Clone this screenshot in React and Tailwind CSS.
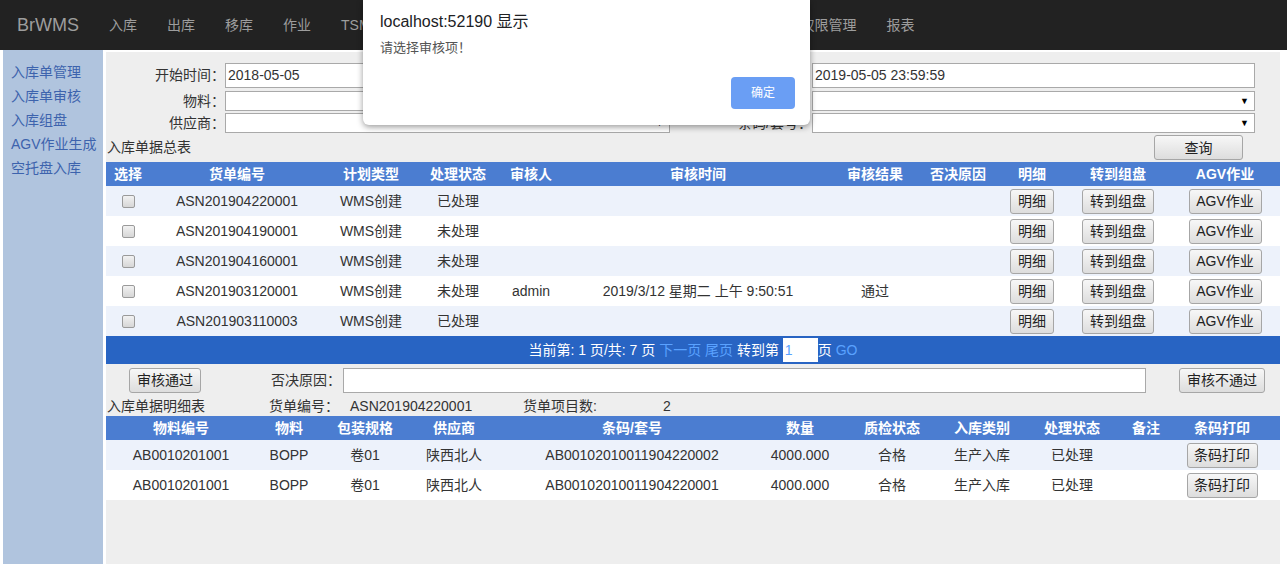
import React from 'react'

const NAV = ['入库', '出库', '移库', '作业', 'TSM接口', '基础数据', '库存管理', '盘点管理', '系统参数设置', '权限管理', '报表']
const SIDE = ['入库单管理', '入库单审核', '入库组盘', 'AGV作业生成', '空托盘入库']

const ORDERS = [
  { no: 'ASN201904220001', state: '已处理', who: '', time: '', result: '' },
  { no: 'ASN201904190001', state: '未处理', who: '', time: '', result: '' },
  { no: 'ASN201904160001', state: '未处理', who: '', time: '', result: '' },
  { no: 'ASN201903120001', state: '未处理', who: 'admin', time: '2019/3/12 星期二 上午 9:50:51', result: '通过' },
  { no: 'ASN201903110003', state: '已处理', who: '', time: '', result: '' },
]

const DETAILS = [
  { code: 'AB0010201001', bar: 'AB00102010011904220002' },
  { code: 'AB0010201001', bar: 'AB00102010011904220001' },
]

const btn =
  'h-[25px] border border-[#a6a6a6] rounded-[3px] bg-gradient-to-b from-[#f7f7f7] to-[#dddddd] text-[14px] text-[#222] leading-none'

function Btn({ w, children }) {
  return <button className={`${btn} ${w}`}>{children}</button>
}

function Select({ w }) {
  return (
    <div className={`${w} h-full bg-white border border-[#a9a9a9] flex items-center justify-end pr-[5px]`}>
      <span className="text-[9px] text-black leading-none">▼</span>
    </div>
  )
}

export default function App() {
  return (
    <div
      className="relative w-[1287px] h-[564px] overflow-hidden bg-white text-[14px] text-[#333]"
      style={{ fontFamily: '"Liberation Sans", "Noto Sans CJK SC", sans-serif' }}
    >
      <nav className="h-[50px] bg-[#222] flex items-center pl-[2px] text-[#9d9d9d] whitespace-nowrap">
        <span className="px-[15px] text-[18px]">BrWMS</span>
        {NAV.map((n) => (
          <span key={n} className="px-[15px] text-[14px]">
            {n}
          </span>
        ))}
      </nav>

      <div className="flex">
        <aside className="ml-[3px] w-[100px] h-[514px] bg-[#b0c4de] pt-[10px] pl-[8px]">
          {SIDE.map((s) => (
            <div key={s} className="leading-[24px] text-[#3d63ad] whitespace-nowrap">
              {s}
            </div>
          ))}
        </aside>

        <main className="ml-[3px] mt-[2px] w-[1174px] h-[512px] bg-[#eeeeee]">
          {/* filter form */}
          <div className="pt-[11px]">
            <div className="flex h-[25px] items-center">
              <label className="w-[119px] text-right">开始时间：</label>
              <div className="w-[445px] h-full bg-white border border-[#a9a9a9] pl-[2px] flex items-center">2018-05-05</div>
              <label className="w-[142px] text-right">结束时间：</label>
              <div className="w-[443px] h-full bg-white border border-[#a9a9a9] pl-[2px] flex items-center">2019-05-05 23:59:59</div>
            </div>
            <div className="flex h-[20px] items-center mt-[3px]">
              <label className="w-[119px] text-right">物料：</label>
              <Select w="w-[445px]" />
              <label className="w-[142px]"></label>
              <Select w="w-[443px]" />
            </div>
            <div className="flex h-[20px] items-center mt-[2px]">
              <label className="w-[119px] text-right">供应商：</label>
              <Select w="w-[445px]" />
              <label className="w-[142px] text-right">条码/套号：</label>
              <Select w="w-[443px]" />
            </div>
            <div className="flex h-[29px] items-center justify-between pl-[1px] pr-[37px]">
              <span>入库单据总表</span>
              <Btn w="w-[89px]">查询</Btn>
            </div>
          </div>

          {/* order table */}
          <div className="grid grid-cols-[44px_174px_94px_80px_66px_268px_86px_80px_68px_104px_110px] text-center">
            {['选择', '货单编号', '计划类型', '处理状态', '审核人', '审核时间', '审核结果', '否决原因', '明细', '转到组盘', 'AGV作业'].map((h) => (
              <div key={h} className="h-[24px] bg-[#4b7dd1] text-white font-bold flex items-center justify-center whitespace-nowrap">
                {h}
              </div>
            ))}
            {ORDERS.map((o, i) => {
              const bg = i % 2 === 0 ? 'bg-[#edf2fb]' : 'bg-white'
              const cell = `h-[30px] ${bg} flex items-center justify-center whitespace-nowrap`
              return (
                <React.Fragment key={o.no}>
                  <div className={cell}>
                    <input
                      type="checkbox"
                      readOnly
                      className="appearance-none w-[13px] h-[13px] rounded-[2px] border border-[#9a9a9a] bg-gradient-to-b from-[#f2f2f2] to-[#d6d6d6]"
                    />
                  </div>
                  <div className={cell}>{o.no}</div>
                  <div className={cell}>WMS创建</div>
                  <div className={cell}>{o.state}</div>
                  <div className={cell}>{o.who}</div>
                  <div className={cell}>{o.time}</div>
                  <div className={cell}>{o.result}</div>
                  <div className={cell}></div>
                  <div className={cell}>
                    <Btn w="w-[44px]">明细</Btn>
                  </div>
                  <div className={cell}>
                    <Btn w="w-[72px]">转到组盘</Btn>
                  </div>
                  <div className={cell}>
                    <Btn w="w-[73px]">AGV作业</Btn>
                  </div>
                </React.Fragment>
              )
            })}
          </div>

          {/* pager */}
          <div className="h-[28px] bg-[#2864c3] flex items-center justify-center text-white whitespace-pre">
            <span>当前第: 1 页/共: 7 页 </span>
            <span className="text-[#5aa2ff]">下一页 尾页 </span>
            <span>转到第 </span>
            <span className="w-[35px] h-[24px] bg-white text-[#5aa2ff] pl-[2px] flex items-center">1</span>
            <span>页 </span>
            <span className="text-[#5aa2ff]">GO</span>
          </div>

          {/* audit row */}
          <div className="h-[32px] flex items-center">
            <div className="ml-[23px]">
              <Btn w="w-[72px] h-[24px]">审核通过</Btn>
            </div>
            <label className="ml-[70px] w-[72px]">否决原因：</label>
            <div className="w-[803px] h-[25px] bg-white border border-[#a9a9a9]" />
            <div className="ml-[33px]">
              <Btn w="w-[86px] h-[24px]">审核不通过</Btn>
            </div>
          </div>

          {/* detail info */}
          <div className="h-[20px] flex items-center pl-[1px] whitespace-nowrap">
            <span className="w-[162px]">入库单据明细表</span>
            <span className="w-[81px]">货单编号：</span>
            <span className="w-[173px]">ASN201904220001</span>
            <span className="w-[140px]">货单项目数:</span>
            <span>2</span>
          </div>

          {/* detail table */}
          <div className="grid grid-cols-[150px_66px_86px_92px_264px_72px_112px_68px_112px_36px_116px] text-center">
            {['物料编号', '物料', '包装规格', '供应商', '条码/套号', '数量', '质检状态', '入库类别', '处理状态', '备注', '条码打印'].map((h) => (
              <div key={h} className="h-[24px] bg-[#4b7dd1] text-white font-bold flex items-center justify-center whitespace-nowrap">
                {h}
              </div>
            ))}
            {DETAILS.map((d, i) => {
              const bg = i % 2 === 0 ? 'bg-[#edf2fb]' : 'bg-white'
              const cell = `h-[30px] ${bg} flex items-center justify-center whitespace-nowrap`
              return (
                <React.Fragment key={d.bar}>
                  <div className={cell}>{d.code}</div>
                  <div className={cell}>BOPP</div>
                  <div className={cell}>卷01</div>
                  <div className={cell}>陕西北人</div>
                  <div className={cell}>{d.bar}</div>
                  <div className={cell}>4000.000</div>
                  <div className={cell}>合格</div>
                  <div className={cell}>生产入库</div>
                  <div className={cell}>已处理</div>
                  <div className={cell}></div>
                  <div className={cell}>
                    <Btn w="w-[71px]">条码打印</Btn>
                  </div>
                </React.Fragment>
              )
            })}
          </div>
        </main>
      </div>

      {/* alert dialog */}
      <div className="absolute left-[363px] top-0 w-[447px] h-[125px] bg-white rounded-b-[6px] shadow-[0_2px_6px_rgba(0,0,0,0.4)]">
        <div className="pl-[17px] pt-[12px] text-[16px] leading-[20px] text-[#202124]">localhost:52190 显示</div>
        <div className="pl-[17px] mt-[8px] text-[13px] leading-[16px] text-[#555]">请选择审核项！</div>
        <button className="absolute right-[15px] bottom-[16px] w-[64px] h-[32px] rounded-[4px] bg-[#6a9ef4] text-white text-[12px]">
          确定
        </button>
      </div>
    </div>
  )
}
